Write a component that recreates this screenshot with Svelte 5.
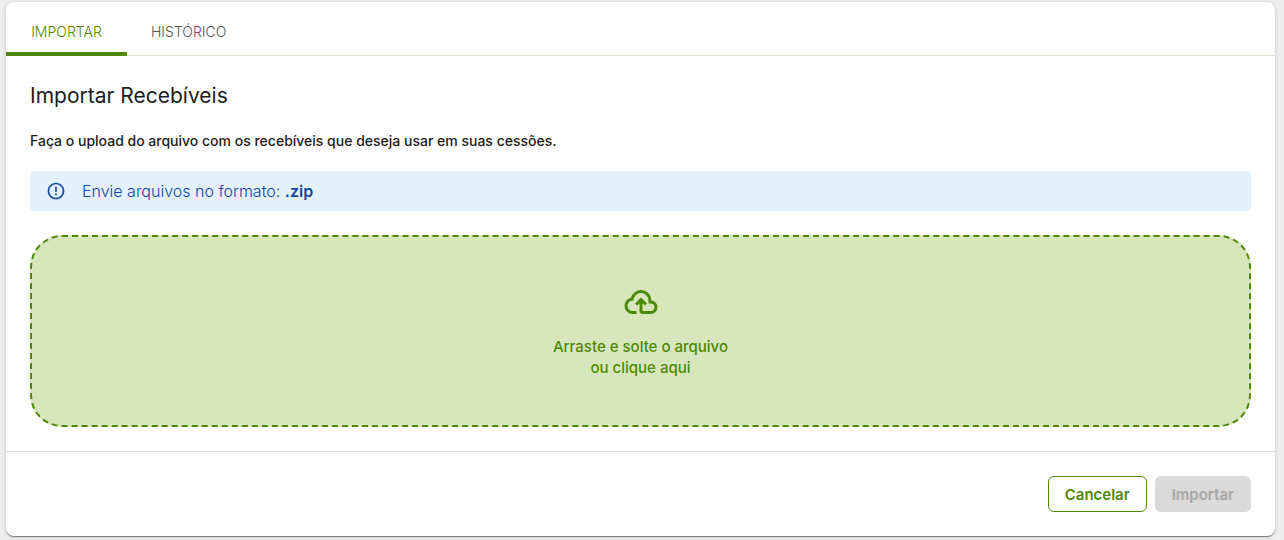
<script>
  const tabs = ['Importar', 'Histórico'];

  let activeTab = $state('Importar');
  let files = $state();

  function clearFile() {
    files = undefined;
  }
</script>

<main class="page">
  <section class="card">
    <nav class="tabs" role="tablist">
      {#each tabs as tab}
        <button
          class="tab"
          class:active={tab === activeTab}
          role="tab"
          aria-selected={tab === activeTab}
          onclick={() => (activeTab = tab)}
        >{tab}</button>
      {/each}
    </nav>

    <div class="content">
      <h1>Importar Recebíveis</h1>
      <p class="description">Faça o upload do arquivo com os recebíveis que deseja usar em suas cessões.</p>

      <div class="alert" role="note">
        <svg viewBox="0 0 24 24" width="20" height="20" aria-hidden="true">
          <path d="M11 15h2v2h-2zm0-8h2v6h-2zm.99-5C6.47 2 2 6.48 2 12s4.47 10 9.99 10C17.52 22 22 17.52 22 12S17.52 2 11.99 2zM12 20c-4.42 0-8-3.58-8-8s3.58-8 8-8 8 3.58 8 8-3.58 8-8 8z" />
        </svg>
        <span>Envie arquivos no formato: <strong>.zip</strong></span>
      </div>

      <label class="dropzone">
        <input type="file" accept=".zip" bind:files />
        <svg viewBox="0 0 24 24" width="36" height="36" aria-hidden="true">
          <path d="M6.5 20Q4.22 20 2.61 18.43 1 16.85 1 14.58 1 12.63 2.17 11.1 3.35 9.57 5.25 9.15 5.88 6.85 7.75 5.43 9.63 4 12 4 14.93 4 16.96 6.04 19 8.07 19 11 20.73 11.2 21.86 12.5 23 13.78 23 15.5 23 17.38 21.69 18.69 20.38 20 18.5 20H13Q12.18 20 11.59 19.41 11 18.83 11 18V12.85L9.4 14.4 8 13 12 9 16 13 14.6 14.4 13 12.85V18H18.5Q19.55 18 20.27 17.27 21 16.55 21 15.5 21 14.45 20.27 13.73 19.55 13 18.5 13H17V11Q17 8.93 15.54 7.46 14.08 6 12 6 9.93 6 8.46 7.46 7 8.93 7 11H6.5Q5.05 11 4.03 12.03 3 13.05 3 14.5 3 15.95 4.03 17 5.05 18 6.5 18H9V20Z" />
        </svg>
        <span>Arraste e solte o arquivo<br />ou clique aqui</span>
      </label>
    </div>

    <footer class="actions">
      <button class="btn outlined" onclick={clearFile}>Cancelar</button>
      <button class="btn contained" disabled={!files?.length}>Importar</button>
    </footer>
  </section>
</main>

<style>
  :global(body) {
    background: #eeeeee;
  }

  .page {
    padding: 2px 9px 4px 6px;
    font-family: Inter, 'Liberation Sans', sans-serif;
    color: #1c1c1c;
  }

  .card {
    background: #fff;
    border-radius: 8px;
    box-shadow:
      0 2px 1px -1px rgba(0, 0, 0, 0.3),
      0 1px 1px rgba(0, 0, 0, 0.2),
      0 1px 4px rgba(0, 0, 0, 0.16);
  }

  .tabs {
    display: flex;
    border-bottom: 1px solid #dbe3d0;
  }

  /* the indicator of the active tab covers the line under the tabs */
  .tab {
    box-sizing: border-box;
    min-width: 121px;
    height: 54px;
    margin-bottom: -1px;
    padding: 8px 24px 0;
    border: 0;
    border-bottom: 4px solid transparent;
    background: none;
    font: inherit;
    font-size: 14px;
    font-weight: 300;
    text-transform: uppercase;
    color: #555;
    cursor: pointer;
  }

  .tab.active {
    border-color: #4f8707;
    color: #4f8707;
  }

  .content {
    padding: 24px;
  }

  h1 {
    margin: 0 0 20px;
    font-size: 21px;
    line-height: 31px;
    font-weight: 400;
  }

  .description {
    margin: 0 0 20px;
    font-size: 14px;
    line-height: 20px;
    font-weight: 500;
  }

  .alert {
    display: flex;
    align-items: center;
    gap: 16px;
    margin-bottom: 24px;
    padding: 8px 16px;
    border-radius: 4px;
    background: #e3f1fd;
    color: #1346a0;
    font-size: 16px;
    line-height: 24px;
    font-weight: 300;
  }

  .alert strong {
    font-weight: 600;
  }

  svg {
    fill: currentColor;
  }

  .dropzone {
    display: flex;
    flex-direction: column;
    align-items: center;
    gap: 16px;
    padding: 47px 24px;
    border: 2px dashed #4f8707;
    border-radius: 32px;
    background: #d7e7bb;
    color: #4f8707;
    font-size: 15px;
    line-height: 21px;
    font-weight: 500;
    text-align: center;
    cursor: pointer;
  }

  .dropzone input {
    display: none;
  }

  .actions {
    display: flex;
    justify-content: flex-end;
    gap: 8px;
    padding: 24px;
    border-top: 1px solid #e0e0e0;
  }

  .btn {
    height: 36px;
    padding: 0 16px;
    border: 1px solid transparent;
    border-radius: 6px;
    font: inherit;
    font-size: 15px;
    font-weight: 600;
    cursor: pointer;
  }

  .outlined {
    border-color: #4f8707;
    background: #fff;
    color: #4f8707;
  }

  .contained {
    background: #4f8707;
    color: #fff;
  }

  .contained:disabled {
    background: #dadada;
    color: #a5a5a5;
    cursor: default;
  }
</style>
